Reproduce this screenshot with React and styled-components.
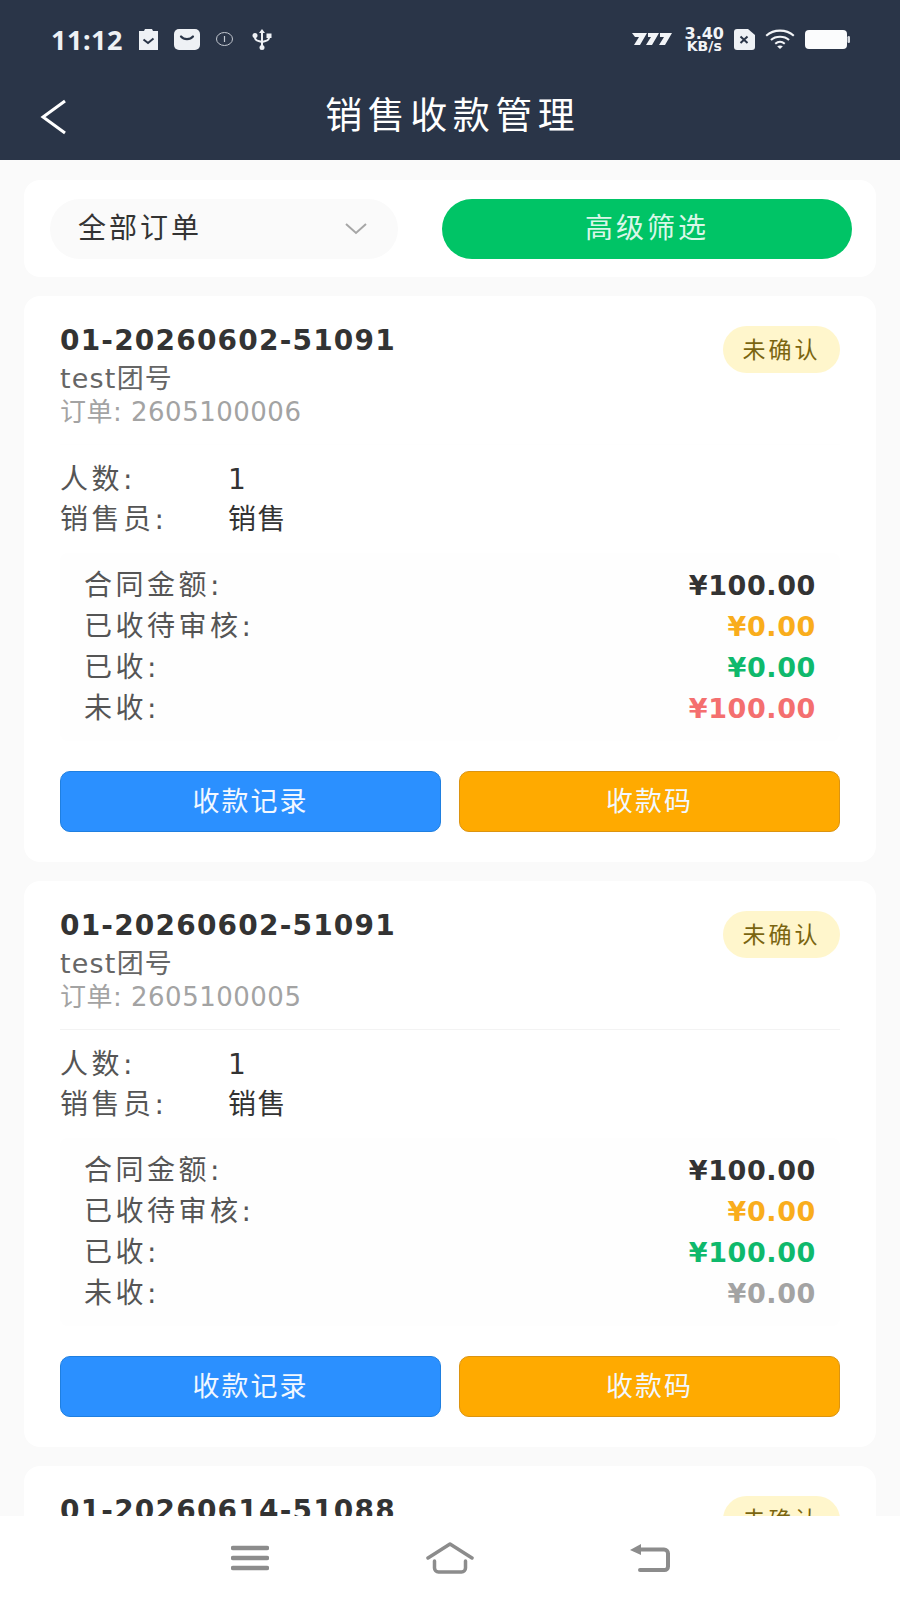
import React from 'react';
import styled, { createGlobalStyle } from 'styled-components';

const orders = [
  {
    no: '01-20260602-51091',
    team: 'test团号',
    order: '2605100006',
    people: '1',
    seller: '销售',
    lineColor: '#fefefe',
    paid: '¥0.00',
    unpaid: '¥100.00',
    unpaidColor: '#f46f6f',
  },
  {
    no: '01-20260602-51091',
    team: 'test团号',
    order: '2605100005',
    people: '1',
    seller: '销售',
    lineColor: '#f3f3f3',
    paid: '¥100.00',
    unpaid: '¥0.00',
    unpaidColor: '#a3a3a3',
  },
];

const App = () => (
  <Page>
    <GlobalStyle />
    <Header>
      <StatusBar>
        <StatusLeft>
          <Time>11:12</Time>
          <svg width="19" height="21" viewBox="0 0 19 21">
            <path d="M0 2h5l1-2h7l1 2h5v19H0z" fill="#eef1f5" />
            <path d="M4.500 10.500l4.500 3.500 5.500-4.500" fill="none" stroke="#2a3548" strokeWidth="2" />
          </svg>
          <svg width="26" height="21" viewBox="0 0 26 21">
            <rect width="26" height="21" rx="5" fill="#eef1f5" />
            <path d="M7 7.500c3 3.500 9 3.500 12 0" fill="none" stroke="#2a3548" strokeWidth="2.200" strokeLinecap="round" />
          </svg>
          <svg width="17" height="14" viewBox="0 0 17 14">
            <ellipse cx="8.500" cy="7" rx="8" ry="6.500" fill="none" stroke="#c3c8d0" strokeWidth="1" />
            <path d="M8.500 4v6" stroke="#c3c8d0" strokeWidth="1.200" />
          </svg>
          <UsbIcon width="20" height="21" viewBox="0 0 20 21">
            <path d="M10 0l3 4h-2v13H9V4H7z" fill="#eef1f5" />
            <circle cx="10" cy="18.500" r="2.500" fill="#eef1f5" />
            <path d="M3 7v2c0 2 2 3 7 4 5-1 7-2 7-4V7" fill="none" stroke="#eef1f5" strokeWidth="2" />
            <circle cx="3" cy="6.500" r="2.500" fill="#eef1f5" />
            <rect x="14.500" y="4.500" width="5" height="4.500" fill="#eef1f5" />
          </UsbIcon>
        </StatusLeft>
        <StatusRight>
          <svg width="40" height="14" viewBox="0 0 40 14">
            <path d="M0 1h15L8 13H2l5-8H3zM16 1h11l-7 12h-6l5-8h-3zM28 1h12l-7 12h-6l5-8h-4z" fill="#f2f4f7" />
          </svg>
          <Speed>
            <b>3.40</b>
            <span>KB/s</span>
          </Speed>
          <svg width="21" height="21" viewBox="0 0 21 21">
            <path d="M3 0h11l7 6v12a3 3 0 0 1-3 3H3a3 3 0 0 1-3-3V3a3 3 0 0 1 3-3z" fill="#eef1f5" />
            <path d="M6.500 7.500l7 6.500M13.500 7.500l-7 6.500" stroke="#2a3548" strokeWidth="2" />
          </svg>
          <svg width="30" height="20" viewBox="0 0 31 21">
            <path d="M1 7c8-7 21-7 29 0M6 11.500c5-4.500 14-4.500 19 0M10.500 15.500c3-2.500 7-2.500 10 0" fill="none" stroke="#f2f4f7" strokeWidth="2.200" />
            <path d="M15.500 21l-3-3c2-1 4-1 6 0z" fill="#f2f4f7" />
          </svg>
          <svg width="45" height="19" viewBox="0 0 45 19">
            <rect width="42" height="19" rx="4" fill="#fbfcfd" />
            <rect x="42.500" y="6" width="2.500" height="7" rx="1.200" fill="#d8dce2" />
          </svg>
        </StatusRight>
      </StatusBar>
      <TitleBar>
        <BackButton>
          <svg width="28" height="36" viewBox="0 0 28 36">
            <path d="M25 2L3 18l22 16" fill="none" stroke="#fff" strokeWidth="3" />
          </svg>
        </BackButton>
        <PageTitle>销售收款管理</PageTitle>
      </TitleBar>
    </Header>

    <Content>
      <FilterCard>
        <Select>
          全部订单
          <svg width="24" height="13" viewBox="0 0 24 13">
            <path d="M2 2l10 9 10-9" fill="none" stroke="#a6a6a6" strokeWidth="2" />
          </svg>
        </Select>
        <FilterButton>高级筛选</FilterButton>
      </FilterCard>

      {orders.map(item => (
        <Card key={item.order}>
          <CardHead>
            <div>
              <OrderNo>{item.no}</OrderNo>
              <Team>{item.team}</Team>
              <OrderLine>订单: {item.order}</OrderLine>
            </div>
            <Badge>未确认</Badge>
          </CardHead>
          <InfoList $line={item.lineColor}>
            <InfoRow>
              <InfoLabel>人数:</InfoLabel>
              <InfoValue>{item.people}</InfoValue>
            </InfoRow>
            <InfoRow>
              <InfoLabel>销售员:</InfoLabel>
              <InfoValue>{item.seller}</InfoValue>
            </InfoRow>
          </InfoList>
          <MoneyBox>
            <MoneyRow>
              <span>合同金额:</span>
              <Amount $color="#333333">¥100.00</Amount>
            </MoneyRow>
            <MoneyRow>
              <span>已收待审核:</span>
              <Amount $color="#f9ad1c">¥0.00</Amount>
            </MoneyRow>
            <MoneyRow>
              <span>已收:</span>
              <Amount $color="#0fb96c">{item.paid}</Amount>
            </MoneyRow>
            <MoneyRow>
              <span>未收:</span>
              <Amount $color={item.unpaidColor}>{item.unpaid}</Amount>
            </MoneyRow>
          </MoneyBox>
          <Actions>
            <ActionButton $bg="#2b90ff" $border="#1f7fe0">收款记录</ActionButton>
            <ActionButton $bg="#ffaa00" $border="#dc9410">收款码</ActionButton>
          </Actions>
        </Card>
      ))}

      <Card>
        <CardHead>
          <OrderNo>01-20260614-51088</OrderNo>
          <Badge>未确认</Badge>
        </CardHead>
      </Card>
    </Content>

    <NavBar>
      <svg width="38" height="26" viewBox="0 0 38 26">
        <path d="M2 3h34M2 13h34M2 23h34" stroke="#8c8c8c" strokeWidth="4.500" strokeLinecap="round" />
      </svg>
      <svg width="48" height="32" viewBox="0 0 48 32">
        <path d="M2 16L24 2l22 14" fill="none" stroke="#8c8c8c" strokeWidth="3.500" strokeLinecap="round" strokeLinejoin="round" />
        <path d="M8.500 19v7a4 4 0 0 0 4 4h23a4 4 0 0 0 4-4v-7" fill="none" stroke="#8c8c8c" strokeWidth="3.500" strokeLinecap="round" />
      </svg>
      <svg width="40" height="28" viewBox="0 0 40 28">
        <path d="M9 5.500h25a4 4 0 0 1 4 4v13a3.500 3.500 0 0 1-3.500 3.500H10" fill="none" stroke="#8c8c8c" strokeWidth="4" strokeLinecap="round" />
        <path d="M11 0L0 6l11 5z" fill="#8c8c8c" />
      </svg>
    </NavBar>
  </Page>
);

const GlobalStyle = createGlobalStyle`
  html, body {
    margin: 0;
    padding: 0;
    background: #fafafa;
  }
  * {
    box-sizing: border-box;
  }
`;

const Page = styled.div`
  position: relative;
  width: 900px;
  height: 1600px;
  overflow: hidden;
  background: #fafafa;
  font-family: "DejaVu Sans", "Noto Sans CJK SC", sans-serif;
`;

const Header = styled.div`
  height: 160px;
  background: #2a3548;
  color: #fff;
`;

const StatusBar = styled.div`
  height: 78px;
  display: flex;
  align-items: center;
  justify-content: space-between;
  padding: 0 50px 0 51px;
`;

const StatusLeft = styled.div`
  display: flex;
  align-items: center;
  gap: 16px;
`;

const Time = styled.span`
  font-family: "Noto Sans", sans-serif;
  font-size: 27px;
  font-weight: 700;
  letter-spacing: 0.500px;
  color: #eef1f5;
`;

const UsbIcon = styled.svg`
  margin-left: 3px;
`;

const StatusRight = styled.div`
  display: flex;
  align-items: center;
  gap: 10px;
`;

const Speed = styled.div`
  display: flex;
  flex-direction: column;
  align-items: center;
  color: #f2f4f7;
  margin-left: 3px;
  b {
    font-size: 16px;
    line-height: 13px;
    font-weight: 700;
  }
  span {
    font-size: 14px;
    line-height: 12px;
    font-weight: 700;
  }
`;

const TitleBar = styled.div`
  height: 82px;
  display: grid;
  grid-template-columns: 1fr auto 1fr;
  align-items: center;
  padding-bottom: 5px;
`;

const BackButton = styled.div`
  padding-left: 40px;
  display: flex;
  align-items: center;
`;

const PageTitle = styled.div`
  font-size: 37px;
  line-height: 44px;
  letter-spacing: 5.500px;
  margin-right: -5.500px;
  color: #fff;
`;

const Content = styled.div`
  display: flex;
  flex-direction: column;
  gap: 19px;
  padding: 20px 24px 0;
`;

const FilterCard = styled.div`
  height: 97px;
  border-radius: 16px;
  background: #fff;
  display: grid;
  grid-template-columns: 348px 410px;
  justify-content: space-between;
  align-items: center;
  padding: 0 24px 0 26px;
`;

const Select = styled.div`
  height: 60px;
  border-radius: 30px;
  background: #fafafa;
  display: flex;
  align-items: center;
  justify-content: space-between;
  padding: 0 30px 0 28px;
  font-size: 28px;
  line-height: 56px;
  letter-spacing: 3px;
  color: #333;
`;

const FilterButton = styled.div`
  height: 60px;
  border-radius: 30px;
  background: #00c466;
  color: #d9f7e8;
  display: flex;
  align-items: center;
  justify-content: center;
  font-size: 28px;
  line-height: 56px;
  letter-spacing: 3px;
`;

const Card = styled.div`
  border-radius: 16px;
  background: #fff;
  padding: 25px 36px 30px;
`;

const CardHead = styled.div`
  display: flex;
  justify-content: space-between;
  align-items: flex-start;
`;

const OrderNo = styled.div`
  font-size: 28px;
  font-weight: 700;
  line-height: 40px;
  letter-spacing: 1.200px;
  color: #333;
`;

const Team = styled.div`
  margin-top: 1px;
  font-size: 27px;
  line-height: 33px;
  letter-spacing: 1.200px;
  color: #666;
`;

const OrderLine = styled.div`
  font-size: 26px;
  line-height: 34px;
  letter-spacing: 0.500px;
  color: #a3a3a3;
`;

const Badge = styled.div`
  margin-top: 5px;
  height: 47px;
  width: 117px;
  border-radius: 24px;
  background: #fff6cc;
  color: #7a6510;
  font-size: 23px;
  line-height: 46px;
  letter-spacing: 3px;
  display: flex;
  align-items: center;
  justify-content: center;
`;

const InfoList = styled.div`
  margin-top: 15px;
  padding-top: 15px;
  border-top: 1px solid ${props => props.$line};
`;

const InfoRow = styled.div`
  display: grid;
  grid-template-columns: 168px 1fr;
  font-size: 28px;
  line-height: 40px;
`;

const InfoLabel = styled.span`
  letter-spacing: 3.500px;
  color: #555;
`;

const InfoValue = styled.span`
  letter-spacing: 1.500px;
  color: #333;
`;

const MoneyBox = styled.div`
  margin-top: 13px;
  padding: 12px 24px;
  border-radius: 8px;
  background: #fefefe;
`;

const MoneyRow = styled.div`
  display: flex;
  justify-content: space-between;
  font-size: 28px;
  line-height: 41px;
  letter-spacing: 3.500px;
  color: #555;
`;

const Amount = styled.span`
  font-weight: 700;
  font-size: 27px;
  letter-spacing: 0.600px;
  color: ${props => props.$color};
`;

const Actions = styled.div`
  margin-top: 30px;
  display: grid;
  grid-template-columns: 1fr 1fr;
  gap: 18px;
`;

const ActionButton = styled.div`
  height: 61px;
  border-radius: 10px;
  background: ${props => props.$bg};
  border: 1px solid ${props => props.$border};
  color: #f2f8ff;
  display: flex;
  align-items: center;
  justify-content: center;
  font-size: 27px;
  line-height: 56px;
  letter-spacing: 2px;
`;

const NavBar = styled.div`
  position: absolute;
  left: 0;
  right: 0;
  bottom: 0;
  height: 84px;
  background: #fff;
  display: grid;
  grid-template-columns: 200px 200px 200px;
  justify-content: center;
  justify-items: center;
  align-items: center;
`;

export default App;
